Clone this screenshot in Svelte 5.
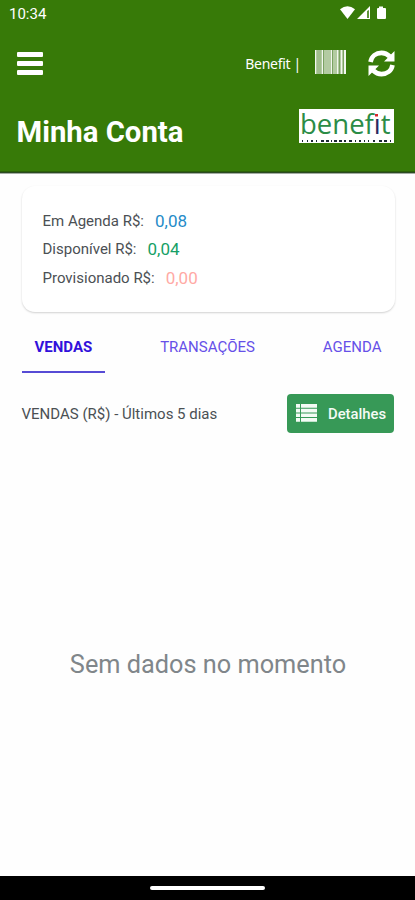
<script lang="ts">
  interface Balance {
    label: string;
    value: string;
    kind: string;
  }

  const balances: Balance[] = [
    { label: 'Em Agenda R$:', value: '0,08', kind: 'agenda' },
    { label: 'Disponível R$:', value: '0,04', kind: 'available' },
    { label: 'Provisionado R$:', value: '0,00', kind: 'pending' }
  ];

  const tabs = ['VENDAS', 'TRANSAÇÕES', 'AGENDA'];
  let active = $state('VENDAS');

  // Marks of the small strip under the logo: [x, width]
  const marks = [
    [3, 1], [8, 1], [12, 2], [17, 1], [22, 3], [27, 3], [32, 1], [35, 3], [40, 3], [45, 2],
    [50, 3], [56, 1], [60, 2], [65, 1], [69, 1], [74, 2], [80, 3], [85, 3], [91, 1]
  ];
</script>

<div class="screen">
  <header>
    <div class="status">
      <span>10:34</span>
      <svg width="50" height="16" viewBox="0 0 50 16" fill="#fff">
        <path d="M0 4.200Q7.500-1.600 15 4.200L7.500 14z" />
        <path fill-rule="evenodd" d="M30 1V14H17zM27.200 6V13H28.800V5z" />
        <path d="M39 1.500h4V3h2q1 0 1 1v9q0 1-1 1h-7q-1 0-1-1V4q0-1 1-1h1z" />
      </svg>
    </div>

    <div class="toolbar">
      <button class="menu" aria-label="Menu"><i></i><i></i><i></i></button>
      <span class="company">Benefit |</span>
      <svg class="barcode" width="31" height="24" viewBox="0 0 31 24">
        <rect width="31" height="24" fill="#b3cba2" />
        <path d="M0 0h1v24H0zM7 0h1v24H7zM16 0h1v24h-1zM22 0h1v24h-1zM26 0h1v24h-1zM29 0h2v24h-2z" fill="#f2f7ef" />
        <path d="M2 0h4v24H2z" fill="#9fbd8b" />
        <path d="M8 0h1v24H8zM17 0h1v24h-1zM24 0h1v24h-1zM28 0h1v24h-1z" fill="#7ba263" />
      </svg>
      <button class="refresh" aria-label="Atualizar">
        <svg width="27" height="27" viewBox="0 0 27 27">
          <g fill="none" stroke="#fff" stroke-width="4.600">
            <path d="M2.500 12C3.500 6 8 2.900 13.500 2.900c3.500 0 6 1.300 8.300 3.600" />
            <path d="M24.500 15C23.500 21 19 24.100 13.500 24.100c-3.500 0-6-1.300-8.300-3.600" />
          </g>
          <path d="M26.500 1v10.500H16zM.5 26V15.500H11z" fill="#fff" />
        </svg>
      </button>
    </div>

    <div class="heading">
      <h1>Minha Conta</h1>
      <div class="logo">
        <span class="word">benef<span class="i">ı</span>t</span>
        <svg width="95" height="34" viewBox="0 0 95 34">
          <rect x="76" y="5" width="3" height="2.500" fill="#d9272e" />
          {#each marks as [x, w]}
            <rect {x} y="31" width={w} height="2" fill="#1d2a36" />
          {/each}
        </svg>
      </div>
    </div>
  </header>

  <main>
    <section class="card">
      {#each balances as item}
        <p>{item.label}<b class={item.kind}>{item.value}</b></p>
      {/each}
    </section>

    <nav>
      {#each tabs as tab}
        <button class:active={active === tab} onclick={() => (active = tab)}>{tab}</button>
      {/each}
    </nav>

    <div class="summary">
      <span>VENDAS (R$) - Últimos 5 dias</span>
      <button class="details">
        <svg width="21" height="18" viewBox="0 0 21 18" fill="#f4fbf5">
          <path d="M0 0h4v3.700H0zM5 0h16v3.700H5zM0 4.700h4v3.700H0zM5 4.700h16v3.700H5zM0 9.400h4v3.700H0zM5 9.400h16v3.700H5zM0 14.100h4v3.700H0zM5 14.100h16v3.700H5z" />
        </svg>
        <span>Detalhes</span>
      </button>
    </div>

    <p class="empty">Sem dados no momento</p>
  </main>

  <footer><div class="handle"></div></footer>
</div>

<style>
  :global(body) {
    margin: 0;
    background: #fefefe;
    font-family: Roboto, sans-serif;
  }

  .screen {
    width: 415px;
    height: 900px;
    display: flex;
    flex-direction: column;
    overflow: hidden;
  }

  button {
    padding: 0;
    border: none;
    background: none;
    font: inherit;
    cursor: pointer;
  }

  svg {
    display: block;
    flex: none;
  }

  header {
    height: 172px;
    box-sizing: border-box;
    background: #377a08;
    border-bottom: 1px solid #2b6008;
    box-shadow: 0 1px 0 #2b4a22, 0 2px 0 #a3aca3;
    color: #fff;
    flex: none;
  }

  .status {
    height: 28px;
    padding: 0 25px 0 9px;
    display: flex;
    align-items: center;
    justify-content: space-between;
    font-size: 15px;
  }

  .status svg {
    margin-top: -2px;
  }

  .toolbar {
    height: 70px;
    padding: 0 20px 0 17px;
    display: flex;
    align-items: center;
  }

  .menu {
    width: 26px;
    display: flex;
    flex-direction: column;
    gap: 4px;
  }

  .menu i {
    height: 5px;
    background: #fff;
    border-radius: 1px;
  }

  .company {
    margin-left: auto;
    font-family: 'Noto Sans', sans-serif;
    font-size: 14px;
    letter-spacing: -0.300px;
  }

  .barcode {
    margin: -2px 22px 0 14px;
  }

  .heading {
    padding: 11px 21px 0 16.500px;
    display: flex;
    align-items: flex-start;
    justify-content: space-between;
  }

  h1 {
    margin: 5px 0 0;
    font-size: 29.300px;
    line-height: 36px;
    font-weight: 700;
  }

  .logo {
    position: relative;
    width: 95px;
    height: 34px;
    background: #fff;
  }

  .logo svg {
    position: absolute;
    inset: 0;
  }

  .word {
    display: block;
    padding-left: 1px;
    font-family: 'Open Sans', sans-serif;
    font-size: 27.500px;
    line-height: 30px;
    color: #2b8c46;
    white-space: nowrap;
  }

  .i {
    color: #29285f;
  }

  main {
    flex: 1;
    padding: 14px 20.500px 0 21.500px;
    display: flex;
    flex-direction: column;
    color: #4b5054;
  }

  .card {
    height: 126px;
    box-sizing: border-box;
    padding: 21px;
    background: #fff;
    border-radius: 13px;
    box-shadow: 0 1px 2px rgba(0, 0, 0, 0.180);
  }

  .card p {
    margin: 0;
    height: 28.300px;
    display: flex;
    align-items: center;
    gap: 11px;
    font-size: 15px;
  }

  .card b {
    font-size: 17px;
    font-weight: 400;
  }

  .card .agenda {
    color: #258bc8;
  }

  .card .available {
    color: #16a066;
  }

  .card .pending {
    color: #ffaaa5;
  }

  nav {
    height: 61px;
    display: flex;
    justify-content: space-between;
  }

  nav button {
    height: 61px;
    padding: 10px 13px 0;
    box-sizing: border-box;
    border-bottom: 2px solid transparent;
    color: #6650e8;
    font-size: 15px;
  }

  nav .active {
    border-color: #574bd5;
    color: #3211db;
    font-weight: 700;
  }

  .summary {
    height: 39px;
    margin: 21px 0 0;
    display: flex;
    align-items: center;
    justify-content: space-between;
    font-size: 15px;
  }

  .details {
    width: 107px;
    height: 39px;
    margin-right: 0.500px;
    padding-left: 8.500px;
    display: flex;
    align-items: center;
    gap: 11.500px;
    border-radius: 4px;
    background: #379957;
    color: #f4fbf5;
    font-size: 14.800px;
    font-weight: 500;
  }

  .details svg {
    margin-top: -2px;
  }

  .empty {
    margin: 217px 0 0;
    text-align: center;
    font-size: 25.300px;
    line-height: 30px;
    color: #80868a;
  }

  footer {
    height: 24px;
    flex: none;
    display: flex;
    align-items: center;
    justify-content: center;
    background: #000;
  }

  .handle {
    width: 115px;
    height: 4px;
    border-radius: 2px;
    background: #fff;
  }
</style>
